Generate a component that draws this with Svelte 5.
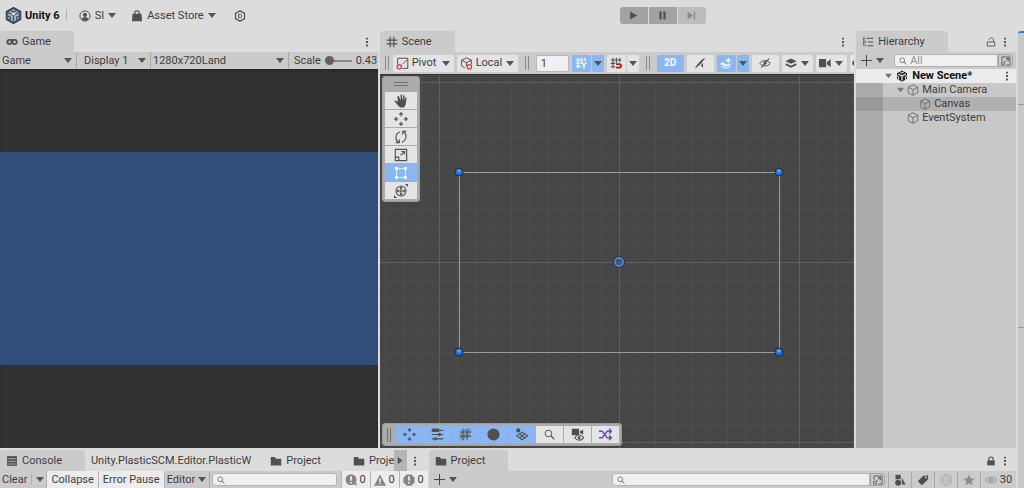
<script lang="ts">
	const tools = ['hand', 'move', 'rotate', 'scale', 'rect', 'transform'];
	const overlays = ['move', 'sliders', 'hatch', 'sphere', 'particles', 'find', 'camEye', 'shuffle'];
	const hierarchy = [
		{ name: 'Main Camera', depth: 1, open: true },
		{ name: 'Canvas', depth: 2, open: false },
		{ name: 'EventSystem', depth: 1, open: false }
	];
	const corners = [
		[-160, -90],
		[160, -90],
		[-160, 90],
		[160, 90]
	];
	const lines = Array.from({ length: 121 }, (_, i) => i - 60);
	const pan = { x: 2, y: 0 };
	const logs = [
		{ icon: 'info', label: 'Messages' },
		{ icon: 'warn', label: 'Warnings' },
		{ icon: 'error', label: 'Errors' }
	];
	const filters = ['shapes', 'tag', 'alert', 'star'];

	let tool = $state('rect');
	let selected = $state('Canvas');
	let enabled = $state(overlays.slice(0, 5));
	let scale = $state(0);

	function toggle(name: string) {
		enabled = enabled.includes(name) ? enabled.filter((n) => n !== name) : [...enabled, name];
	}
</script>

{#snippet icon(name: string)}
	<svg class="icon {name}" viewBox="0 0 16 16" aria-hidden="true">
		{#if name === 'unity'}
			<path d="M8 .4 14.8 4.2v7.6L8 15.6 1.2 11.8V4.2z" fill="#4c5763" stroke="#303a45" />
			<path d="m8 2.2 5 2.9v5.8l-5 2.9-5-2.9V5.100z" fill="#a9bccd" />
			<path d="M8 8v5.500M8 8 3.200 5.200M8 8l4.800-2.800M6 3.500l2 1.300 2-1.300M3 8.500l2 1v2.500M13 8.500l-2 1v2.500" fill="none" stroke="#3d4956" stroke-width="1.200" />
			<path d="m8 5.500 2 1.200-2 1.200-2-1.200z" fill="#e4eaf0" />
		{:else if name === 'user'}
			<circle cx="8" cy="8" r="6.800" fill="none" stroke="currentColor" stroke-width="1.300" />
			<circle cx="8" cy="6.500" r="2.700" fill="currentColor" />
			<path d="M3.500 12c1-3 8-3 9 0-2 3-7 3-9 0z" fill="currentColor" />
		{:else if name === 'bag'}
			<path d="M2 5h12l.7 10H1.300z" fill="currentColor" />
			<path d="M5 7V4a3 3 0 0 1 6 0v3" fill="none" stroke="currentColor" stroke-width="1.500" />
		{:else if name === 'hex'}
			<path d="m8 1 6 3.500v7L8 15l-6-3.500v-7z" fill="none" stroke="currentColor" stroke-width="1.600" />
			<path d="M6.300 5.500v5h1.500c3 0 3-5 0-5z" fill="none" stroke="currentColor" stroke-width="1.300" />
		{:else if name === 'game'}
			<path d="M4.500 4h7a4 4 0 0 1 0 8H10L8.500 10.500h-1L6 12H4.500a4 4 0 0 1 0-8z" fill="currentColor" />
			<path d="M2.800 8h4M4.800 6v4" stroke="#cbcbcb" stroke-width="1.200" />
			<circle cx="11.500" cy="8" r="1.700" fill="#cbcbcb" />
		{:else if name === 'grid'}
			<path d="M5.500 1v14M10.500 1v14M1 5.500h14M1 10.500h14" stroke="currentColor" stroke-width="1.500" />
		{:else if name === 'tree'}
			<path d="M1 3h3M6 3h9M4 8h2M8 8h7M4 13h2M8 13h7M2.500 3v10" stroke="currentColor" stroke-width="1.500" fill="none" />
		{:else if name === 'folder'}
			<path d="M1 2.500h5.500L8 5h7v9H1z" fill="currentColor" />
		{:else if name === 'console'}
			<path d="M1.500 1.500h13v13h-13z" fill="currentColor" />
			<path d="M3 5h10M3 8.500h10M3 12h10" stroke="#cbcbcb" />
		{:else if name === 'dots'}
			<path d="M6.500 1h3v3h-3zM6.500 6.500h3v3h-3zM6.500 12h3v3h-3z" fill="currentColor" />
		{:else if name === 'play'}
			<path d="M2 1v14L15 8z" fill="currentColor" />
		{:else if name === 'pause'}
			<path d="M2.500 1h4v14h-4zM9.500 1h4v14h-4z" fill="currentColor" />
		{:else if name === 'step'}
			<path d="M1 1v14l9.500-7zM12 1h2.500v14H12z" fill="currentColor" />
		{:else if name === 'pivot'}
			<path d="M2 9V1.500h12.500v12.500H8M8 9l6-6" fill="none" stroke="currentColor" stroke-width="1.200" />
			<circle cx="4" cy="12" r="2.700" fill="none" stroke="#d93b3b" stroke-width="1.500" />
		{:else if name === 'local'}
			<path d="m8 1 6 3v5M8 1 2 4v7l4 2.500M2 4l6 3 6-3M8 7v4" fill="none" stroke="currentColor" stroke-width="1.200" />
			<circle cx="11.500" cy="12" r="2.700" fill="none" stroke="#d93b3b" stroke-width="1.500" />
		{:else if name === 'gridY'}
			<path d="M4 1v14M8.500 1v8M13 1v4M1 4h14M1 8h8M1 12.500h7" stroke="currentColor" stroke-width="1.500" />
			<path d="m9 7 3 4 3-4M12 11v4.500" fill="none" stroke="currentColor" stroke-width="1.900" />
		{:else if name === 'snap'}
			<path d="M4 1v14M8.500 1v7M13 1v6M1 4h14M1 8.500h6M1 13h6" stroke="currentColor" stroke-width="1.400" />
			<path d="M8 9.500h4.500a2.300 2.300 0 0 1 0 4.600H8" fill="none" stroke="#c91313" stroke-width="2.400" />
		{:else if name === 'mute'}
			<path d="M3 11.500h3l5-5V3zM12 7.500V14l-3-2.500" fill="currentColor" />
			<path d="M2 14.500 14 2" stroke="currentColor" stroke-width="1.500" />
		{:else if name === 'effects'}
			<path d="m1 11.500 7 3 6-3V13l-6 3-7-3zM1 8l3-1.500 2 2 3 1.500 5-1.500v1.800L8 13 1 10z" fill="currentColor" />
			<path d="m11 0 1.200 3.200L15.500 4.500l-3.300 1.200L11 9 9.800 5.700 6.500 4.500l3.300-1.300z" fill="currentColor" />
		{:else if name === 'hidden'}
			<path d="M1 8.500c3.500-5 10.500-5 14 0-3.500 4.500-10.500 4.500-14 0z" fill="none" stroke="currentColor" stroke-width="1.300" />
			<circle cx="8" cy="8" r="2.200" fill="currentColor" />
			<path d="M3 14 13.500 2" stroke="currentColor" stroke-width="1.500" />
		{:else if name === 'layers'}
			<path d="m8 2 7.500 3.500L8 9 .5 5.500z" fill="currentColor" />
			<path d="m1 9.500 7 3.500 7-3.500" fill="none" stroke="currentColor" stroke-width="2.400" />
		{:else if name === 'camera'}
			<path d="M0 2.500h9.500v11H0zM10.500 7 15.500 2.500v11L10.500 9.500z" fill="currentColor" />
		{:else if name === 'hand'}
			<path d="M4.200 9 1.800 7.500C.7 7 0 8 1 8.800l3.800 4.700c1 1.500 2 2 3.700 2 3.200 0 4.500-1.700 4.900-4.500l1-6.400c.1-1-1.300-1.200-1.500-.2L12 8l.1-6c0-1.100-1.500-1.100-1.600 0L10 7.300 8.900 1c-.2-1-1.600-.8-1.500.2L7.700 7.500 5.500 2.600C5 1.600 3.800 2.200 4 3.100z" fill="currentColor" />
		{:else if name === 'move'}
			<path d="M8 1v4M8 11v4M1 8h4M11 8h4M6 3l2-2 2 2M6 13l2 2 2-2M3 6 1 8l2 2M13 6l2 2-2 2" fill="none" stroke="currentColor" stroke-width="1.300" />
		{:else if name === 'rotate'}
			<path d="M5.500 14.500C.5 11 1.500 4 7 2M10.500 1.500C15.500 5 14.500 12 9 14M2 14.500h4V10.500M14 1.500h-4V5.500" fill="none" stroke="currentColor" stroke-width="1.300" />
		{:else if name === 'scale'}
			<path d="M1.500 1.500h13v13h-13zM1.500 10.500h4v4M7.500 8.500 12 4M8.500 4H12v3.500" fill="none" stroke="currentColor" stroke-width="1.300" />
		{:else if name === 'rect'}
			<path d="M3 3h10v10H3z" fill="none" stroke="currentColor" />
			<path d="M1.200 1.200h3.400v3.400H1.200zM11.400 1.200h3.400v3.400h-3.400zM1.200 11.400h3.400v3.400H1.200zM11.400 11.400h3.400v3.400h-3.400z" fill="currentColor" />
		{:else if name === 'transform'}
			<circle cx="8" cy="8" r="5.800" fill="none" stroke="currentColor" stroke-width="1.200" />
			<path d="M8 3v10M3 8h10M6.500 5 8 3.500 9.500 5M6.500 11 8 12.500 9.500 11M5 6.500 3.500 8 5 9.500M11 6.500 12.500 8 11 9.500" fill="none" stroke="currentColor" stroke-width="1.200" />
			<path d="M12.500 0H16v3.500zM0 12.500V16h3.500z" fill="currentColor" />
		{:else if name === 'sliders'}
			<path d="M1 3h14M1 8h14M1 13.500h14" stroke="currentColor" stroke-width="1.500" />
			<path d="M1 .5h9v4.500H1zM9 6.300h3v3.500H9zM4 11.700h3v3.500H4z" fill="currentColor" />
		{:else if name === 'hatch'}
			<path d="M5 1v14M10 1v14M1 5h14M1 10h14" stroke="currentColor" stroke-width="1.300" />
			<path d="M1 14 14 1M4 15 15 4M1 9l8-8" stroke="currentColor" />
		{:else if name === 'sphere'}
			<circle cx="8" cy="8" r="7.500" fill="currentColor" />
		{:else if name === 'particles'}
			<circle cx="4" cy="3" r="2.600" fill="currentColor" />
			<path d="m9 5 6.500 4.500L9 14.500 2 9.500zM5.500 7l6.500 5M12.500 7l-7 5" fill="none" stroke="currentColor" stroke-width="1.300" />
		{:else if name === 'find'}
			<circle cx="6.500" cy="6.500" r="4.800" fill="none" stroke="currentColor" stroke-width="1.400" />
			<path d="m10 10 5 5" stroke="currentColor" stroke-width="1.800" />
		{:else if name === 'camEye'}
			<path d="M1 1h9v8H1zM11 4l4-2v6l-4-2z" fill="currentColor" />
			<path d="M4.500 12c3-4.500 8-4.500 11 0-3 4-8 4-11 0z" fill="#e4e4e4" stroke="currentColor" stroke-width="1.400" />
			<circle cx="10" cy="12" r="1.800" fill="currentColor" />
		{:else if name === 'shuffle'}
			<path d="M0 4h4l6 8h5M0 12h4l6-8h5M12.500 1 15.500 4l-3 3M12.500 9l3 3-3 3" fill="none" stroke="#7146b8" stroke-width="1.600" />
		{:else if name === 'cube'}
			<path d="m8 1 6.300 3.300v7.400L8 15l-6.300-3.300V4.300zM1.700 4.300 8 7.600l6.300-3.300M8 7.600V15" fill="none" stroke="#6a6a6a" stroke-width="1.200" />
		{:else if name === 'sceneAsset'}
			<path d="m8 .5 6.700 3.800v7.400L8 15.500l-6.700-3.800V4.300z" fill="#252525" />
			<path d="M8 8v6M8 8 3 5.200M8 8l5-2.800" stroke="#ececec" stroke-width="1.600" />
			<path d="m5 2.200 3 1.900 3-1.900M1.300 7.500l2 1.200v3.800M14.700 7.500l-2 1.200v3.800" stroke="#ececec" stroke-width="1.300" fill="none" />
		{:else if name === 'unlock'}
			<path d="M2 8h12v6.500H2zM5 4.500V4c0-3.500 7-3.500 7 0v4" fill="none" stroke="currentColor" stroke-width="1.400" />
		{:else if name === 'lock'}
			<path d="M2 7h12v8H2z" fill="currentColor" />
			<path d="M4.500 7V5c0-4.500 7-4.500 7 0v2" fill="none" stroke="currentColor" stroke-width="1.900" />
		{:else if name === 'popout'}
			<path d="M1.500 8V1.500h13v13H8M1 10h4.500v4.500H1zM7 9l5-5M8 4h4v4" fill="none" stroke="currentColor" stroke-width="1.300" />
		{:else if name === 'info'}
			<circle cx="8" cy="7.500" r="7.300" fill="#858585" />
			<path d="M9 12h6.500v3.500z" fill="#858585" />
			<path d="M8 3v6M8 10.500v2" stroke="#fff" stroke-width="2" />
		{:else if name === 'warn'}
			<path d="m8 .5 8 15H0z" fill="#858585" />
			<path d="M8 5.500v5M8 11.500v2" stroke="#fff" stroke-width="1.800" />
		{:else if name === 'error'}
			<path d="M5 .5h6L15.500 5v6L11 15.500H5L.5 11V5z" fill="#858585" />
			<path d="M8 3v6M8 10.500v2" stroke="#fff" stroke-width="2" />
		{:else if name === 'shapes'}
			<path d="M2 1h7v6H2zM10.500 5l5 9h-5z" fill="currentColor" />
			<circle cx="5.500" cy="11.500" r="4" fill="currentColor" />
		{:else if name === 'tag'}
			<path d="m8 2.500 6.500-1L15 7l-8.500 8L1 9.500z" fill="currentColor" />
			<circle cx="11.800" cy="4.500" r="1.300" fill="#cbcbcb" />
		{:else if name === 'alert'}
			<path d="M5 .7h6L15.300 5v6L11 15.300H5L.7 11V5z" fill="#bebebe" stroke="#b2b2b2" />
			<path d="M8 3v6M8 10.500v2" stroke="#cbcbcb" stroke-width="2" />
		{:else if name === 'star'}
			<path d="m8 .8 2.200 4.900 5.300.5-4 3.500 1.200 5.300L8 12.300 3.300 15l1.200-5.300-4-3.500 5.300-.5z" fill="#8c8c8c" />
		{:else if name === 'eye'}
			<path d="M.5 8c3.500-5.500 11.500-5.500 15 0-3.500 5.500-11.500 5.500-15 0z" fill="none" stroke="#a4a4a4" stroke-width="1.400" />
			<circle cx="8" cy="8" r="3.300" fill="#a4a4a4" />
		{/if}
	</svg>
{/snippet}

{#snippet arrow()}
	<svg class="arrow" viewBox="0 0 8 5" aria-hidden="true"><path d="M0 0h8L4 5z" fill="currentColor" /></svg>
{/snippet}

{#snippet dropdown(label: string, kind: string)}
	<label class="dropdown {kind}-menu">
		{#if kind === 'pivot' || kind === 'local'}{@render icon(kind)}{/if}
		<select aria-label={kind}><option>{label}</option></select>
		{@render arrow()}
	</label>
{/snippet}

{#snippet more()}
	<button class="plain" aria-label="More">{@render icon('dots')}</button>
{/snippet}

<div class="editor">
	<header class="topbar">
		<div class="account">
			<strong class="brand">{@render icon('unity')}Unity 6</strong>
			<span class="rule"></span>
			<button class="plain">{@render icon('user')}SI{@render arrow()}</button>
			<button class="plain store">{@render icon('bag')}Asset Store{@render arrow()}</button>
			<button class="plain" aria-label="Services">{@render icon('hex')}</button>
		</div>
		<div class="playback">
			<button aria-label="Play">{@render icon('play')}</button>
			<button aria-label="Pause">{@render icon('pause')}</button>
			<button aria-label="Step" disabled>{@render icon('step')}</button>
		</div>
	</header>

	<div class="body">
		<div class="docks">
			<div class="upper">
				<section class="panel game-panel">
					<div class="tabs">
						<button class="tab active">{@render icon('game')}Game</button>
						<div class="tab-end">{@render more()}</div>
					</div>
					<div class="toolbar">
						{@render dropdown('Game', 'view')}
						{@render dropdown('Display 1', 'display')}
						{@render dropdown('1280x720Land', 'resolution')}
						<label class="zoom">Scale <input type="range" min="0" max="5" step="0.01" bind:value={scale} /> 0.43</label>
					</div>
					<div class="game-view"><div class="frame"></div></div>
				</section>

				<section class="panel scene-panel">
					<div class="tabs">
						<button class="tab active">{@render icon('grid')}Scene</button>
						<div class="tab-end">{@render more()}</div>
					</div>
					<div class="scene-bar">
						<span class="handle"></span>
						{@render dropdown('Pivot', 'pivot')}
						{@render dropdown('Local', 'local')}
						<span class="handle"></span>
						<input class="step-size" aria-label="Grid size" value="1" />
						<div class="split on">
							<button aria-label="Grid axis">{@render icon('gridY')}</button>
							<button aria-label="Grid options">{@render arrow()}</button>
						</div>
						<div class="split">
							<button aria-label="Snapping">{@render icon('snap')}</button>
							<button aria-label="Snap options">{@render arrow()}</button>
						</div>
						<span class="handle"></span>
						<button class="chip on">2D</button>
						<button class="chip" aria-label="Audio">{@render icon('mute')}</button>
						<div class="split on">
							<button aria-label="Effects">{@render icon('effects')}</button>
							<button aria-label="Effect options">{@render arrow()}</button>
						</div>
						<button class="chip" aria-label="Visibility">{@render icon('hidden')}</button>
						<button class="chip wide" aria-label="Layers">{@render icon('layers')}{@render arrow()}</button>
						<button class="chip wide" aria-label="Camera">{@render icon('camera')}{@render arrow()}</button>
						<button class="chip gizmos" aria-label="Gizmos">{@render icon('sphere')}</button>
					</div>
					<div class="scene-view">
						<svg class="world" width="2" height="2" aria-label="Scene">
							<g transform="translate({pan.x} {pan.y})">
								{#each lines as i}
									<path d="M{i * 18} -1200V1200M-1200 {i * 18}H1200" class:major={i % 10 === 0} />
								{/each}
								<rect x="-160" y="-90" width="320" height="180" />
								{#each corners as [x, y]}
									<circle class="corner" cx={x} cy={y} r="4" />
									<circle class="shine" cx={x} cy={y - 1} r="1.500" />
								{/each}
								<circle class="pivot-halo" r="5.500" />
								<circle class="pivot-ring" r="4" />
							</g>
						</svg>
						<div class="tool-palette">
							<span class="grip"></span>
							{#each tools as name}
								<button class:on={tool === name} aria-label={name} onclick={() => (tool = name)}>
									{@render icon(name)}
								</button>
							{/each}
						</div>
						<div class="overlay-bar">
							<span class="handle"></span>
							{#each overlays as name}
								<button class:on={enabled.includes(name)} aria-label={name} onclick={() => toggle(name)}>
									{@render icon(name)}
								</button>
							{/each}
						</div>
					</div>
				</section>

				<section class="panel hierarchy-panel">
					<div class="tabs">
						<button class="tab active">{@render icon('tree')}Hierarchy</button>
						<div class="tab-end">
							<button class="plain" aria-label="Lock">{@render icon('unlock')}</button>
							{@render more()}
						</div>
					</div>
					<div class="toolbar">
						<button class="plain add" aria-label="Create"><span class="plus"></span>{@render arrow()}</button>
						<label class="search">{@render icon('find')}<input placeholder="All" aria-label="Search hierarchy" /></label>
						<button class="popout-button" aria-label="Open search">{@render icon('popout')}</button>
					</div>
					<div class="tree-view">
						<div class="row scene-row">
							{@render arrow()}{@render icon('sceneAsset')}<strong>New Scene*</strong>
							{@render more()}
						</div>
						{#each hierarchy as item}
							<button
								class="row depth-{item.depth}"
								class:selected={selected === item.name}
								onclick={() => (selected = item.name)}
							>
								<span class="fold">{#if item.open}{@render arrow()}{/if}</span>
								{@render icon('cube')}{item.name}
							</button>
						{/each}
					</div>
				</section>
			</div>

			<div class="lower">
				<section class="panel console-panel">
					<div class="tabs">
						<button class="tab active">{@render icon('console')}Console</button>
						<button class="tab">Unity.PlasticSCM.Editor.PlasticW</button>
						<button class="tab second">{@render icon('folder')}Project</button>
						<button class="tab cut">{@render icon('folder')}Project</button>
						<button class="scroll" aria-label="Next tabs">{@render arrow()}</button>
						<div class="tab-end">{@render more()}</div>
					</div>
					<div class="toolbar">
						<button class="plain clear">Clear<span class="rule"></span>{@render arrow()}</button>
						<button class="lit">Collapse</button>
						<button class="lit">Error Pause</button>
						{@render dropdown('Editor', 'target')}
						<label class="search">{@render icon('find')}<input aria-label="Search console" /></label>
						{#each logs as log}
							<button class="lit count" aria-label={log.label}>{@render icon(log.icon)}0</button>
						{/each}
					</div>
				</section>

				<section class="panel project-panel">
					<div class="tabs">
						<button class="tab active">{@render icon('folder')}Project</button>
						<div class="tab-end">
							<button class="plain" aria-label="Lock">{@render icon('lock')}</button>
							{@render more()}
						</div>
					</div>
					<div class="toolbar">
						<button class="plain add" aria-label="Create"><span class="plus"></span>{@render arrow()}</button>
						<label class="search">{@render icon('find')}<input aria-label="Search project" /></label>
						<button class="popout-button" aria-label="Open search">{@render icon('popout')}</button>
						<div class="filters">
							{#each filters as name}
								<button aria-label={name}>{@render icon(name)}</button>
							{/each}
							<button class="visible">{@render icon('eye')}30</button>
						</div>
					</div>
				</section>
			</div>
		</div>
		<aside class="inspector"><div></div><div></div></aside>
	</div>
</div>

<style>
	:global(body) {
		background: #dcdcdc;
	}

	.editor {
		height: 100vh;
		display: flex;
		flex-direction: column;
		overflow: hidden;
		background: #dcdcdc;
		color: #3c3c3c;
		font: 11px/16px Roboto, Inter, sans-serif;
	}

	.editor * {
		box-sizing: border-box;
	}

	button,
	input,
	select {
		margin: 0;
		padding: 0;
		border: 0;
		background: none;
		color: inherit;
		font: inherit;
		min-width: 0;
	}

	button {
		display: flex;
		align-items: center;
		justify-content: center;
		white-space: nowrap;
	}

	.icon {
		width: 12px;
		height: 12px;
		flex: none;
		color: #505050;
	}

	.arrow {
		width: 8px;
		height: 5px;
		flex: none;
		color: #555;
	}

	.rule {
		width: 1px;
		height: 11px;
		background: #b0b0b0;
	}

	.topbar {
		flex: none;
		height: 31px;
		display: grid;
		grid-template-columns: 1fr auto 1fr;
		padding-left: 5px;
	}

	.account {
		display: flex;
		align-items: center;
		gap: 12px;
	}

	.brand {
		display: flex;
		align-items: center;
		gap: 3px;
		margin-right: -6px;
		color: #111;
		font-weight: 700;
	}

	.brand .icon {
		width: 17px;
		height: 17px;
	}

	.account .plain {
		gap: 4px;
	}

	.account .store {
		margin-left: 3px;
		margin-right: 6px;
	}

	.playback {
		display: flex;
		align-items: center;
		gap: 1px;
		margin-left: 296px;
	}

	.playback button {
		width: 28px;
		height: 17px;
		background: #a2a2a2;
	}

	.playback button:first-child {
		border-radius: 3px 0 0 3px;
	}

	.playback button:last-child {
		border-radius: 0 3px 3px 0;
		background: #bcbcbc;
	}

	.playback .icon {
		width: 9px;
		height: 9px;
	}

	.playback button:disabled .icon {
		color: #888;
	}

	.body {
		flex: 1;
		min-height: 0;
		display: flex;
		gap: 2px;
	}

	.docks {
		flex: 1;
		min-width: 0;
		display: flex;
		flex-direction: column;
		gap: 2px;
	}

	.upper {
		flex: 1;
		min-height: 0;
		display: grid;
		grid-template-columns: 378fr 475fr 160fr;
		gap: 2px;
	}

	.lower {
		display: grid;
		grid-template-columns: 428fr 588fr;
		gap: 1px;
	}

	.panel {
		min-width: 0;
		min-height: 0;
		display: flex;
		flex-direction: column;
		overflow: hidden;
	}

	.tabs {
		flex: none;
		display: flex;
		height: 21px;
	}

	.tab {
		gap: 4px;
		padding: 0 8px 0 6px;
	}

	.tab.active {
		padding-right: 23px;
		border-radius: 3px 3px 0 0;
		background: #cbcbcb;
	}

	.tab-end {
		display: flex;
		align-items: center;
		margin-left: auto;
		padding-right: 6px;
		gap: 4px;
	}

	.tab-end .icon {
		width: 10px;
		height: 10px;
	}

	.toolbar {
		flex: none;
		height: 17px;
		display: flex;
		align-items: stretch;
		background: #cbcbcb;
	}

	.dropdown {
		display: flex;
		align-items: center;
		flex: none;
	}

	.dropdown select {
		flex: 1;
		appearance: none;
	}

	.toolbar .dropdown {
		padding: 0 4px 0 2px;
		border-right: 1px solid #a8a8a8;
	}

	.view-menu {
		width: 77px;
	}

	.toolbar .display-menu {
		width: 74px;
		padding-left: 7px;
	}

	.resolution-menu {
		width: 138px;
	}

	.zoom {
		display: flex;
		align-items: center;
		gap: 4px;
		padding-left: 5px;
		white-space: nowrap;
	}

	.zoom input {
		width: 27px;
		height: 9px;
		appearance: none;
		background: linear-gradient(#858585, #858585) center / 100% 2px no-repeat;
	}

	.zoom input::-webkit-slider-thumb {
		width: 9px;
		height: 9px;
		appearance: none;
		border-radius: 50%;
		background: #606060;
	}

	.game-view {
		flex: 1;
		display: flex;
		align-items: center;
		background: #323232;
		box-shadow: inset 0 2px 3px #262626;
	}

	.frame {
		width: 100%;
		aspect-ratio: 16 / 9;
		background: #314d79;
	}

	.scene-bar {
		flex: none;
		height: 22px;
		display: flex;
		align-items: center;
		gap: 3px;
		padding-left: 5px;
		overflow: hidden;
		background: #cbcbcb;
	}

	.handle {
		width: 4px;
		height: 14px;
		flex: none;
		margin: 0 4px;
		border: solid #8a8a8a;
		border-width: 0 1px;
	}

	.handle:first-child {
		margin-left: 0;
		margin-right: 1px;
	}

	.scene-bar .dropdown {
		width: 61px;
		height: 17px;
		gap: 3px;
		padding: 0 4px 0 3px;
		border-radius: 2px;
		background: #e4e4e4;
	}

	.scene-bar .dropdown .icon {
		width: 13px;
		height: 13px;
	}

	.step-size {
		width: 33px;
		height: 17px;
		flex: none;
		padding-left: 4px;
		border: 1px solid #b8b8b8;
		border-radius: 2px;
		background: #f0f0f0;
	}

	.split {
		display: flex;
		flex: none;
		gap: 1px;
	}

	.split button,
	.chip {
		height: 17px;
		flex: none;
		border-radius: 2px;
		background: #e4e4e4;
	}

	.split button:first-child {
		width: 19px;
	}

	.split button:last-child {
		width: 12px;
	}

	.chip {
		width: 27px;
	}

	.chip.wide {
		width: 31px;
		gap: 4px;
	}

	.chip.gizmos {
		justify-content: flex-start;
		padding-left: 2px;
	}

	.gizmos .icon {
		width: 6px;
		height: 6px;
	}

	.chip.on,
	.split.on button,
	.scene-view button.on {
		background: #8ab6f2;
	}

	.chip.on {
		color: #f4f8ff;
		font-size: 10px;
		font-weight: 700;
	}

	.on .gridY,
	.on .effects,
	.on .rect {
		color: #f4f8ff;
	}

	.scene-view {
		flex: 1;
		position: relative;
		overflow: hidden;
		border-top: 1px solid #333;
		background: #464646;
	}

	.world {
		position: absolute;
		left: 50%;
		top: 50%;
		overflow: visible;
		fill: none;
	}

	.world path {
		stroke: #4d4d4d;
		shape-rendering: crispEdges;
	}

	.world .major {
		stroke: #606060;
	}

	.world rect {
		stroke: #9c9c9c;
		shape-rendering: crispEdges;
	}

	.world .corner {
		fill: #1c6fe0;
		stroke: #202a38;
	}

	.world .shine {
		fill: #6aa6f2;
	}

	.pivot-halo {
		stroke: #303030;
	}

	.pivot-ring {
		stroke: #3f86e0;
		stroke-width: 2px;
	}

	.tool-palette,
	.overlay-bar {
		position: absolute;
		left: 2px;
		display: flex;
		border-radius: 3px;
		border: 1px solid #9c9c9c;
		background: #ababab;
		gap: 1px;
	}

	.tool-palette {
		top: 1px;
		flex-direction: column;
		padding: 0 2px 2px;
	}

	.grip {
		width: 14px;
		height: 4px;
		margin: 5px auto;
		border: solid #707070;
		border-width: 1px 0;
	}

	.tool-palette button {
		width: 32px;
		height: 17px;
		background: #e4e4e4;
	}

	.tool-palette .icon {
		width: 14px;
		height: 14px;
	}

	.overlay-bar {
		bottom: 2px;
		align-items: center;
		padding: 2px 2px 2px 4px;
	}

	.overlay-bar .handle {
		margin-right: 4px;
		border-color: #707070;
	}

	.overlay-bar button {
		width: 27px;
		height: 17px;
		background: #e4e4e4;
	}

	.overlay-bar .icon {
		width: 13px;
		height: 13px;
	}

	.overlay-bar .find {
		width: 11px;
		height: 11px;
	}

	.search {
		flex: 1;
		min-width: 0;
		display: flex;
		align-items: center;
		gap: 3px;
		margin: 2px 0;
		padding-left: 4px;
		border: 1px solid #b4b4b4;
		border-radius: 3px 0 0 3px;
		background: #f0f0f0;
	}

	.search .icon {
		width: 8px;
		height: 8px;
	}

	.search input {
		flex: 1;
		height: 11px;
		outline: 0;
	}

	.search input::placeholder {
		color: #909090;
	}

	.add {
		gap: 4px;
		padding: 0 10px 0 5px;
	}

	.plus {
		width: 11px;
		height: 11px;
		background:
			linear-gradient(#484848, #484848) center / 100% 1px no-repeat,
			linear-gradient(#484848, #484848) center / 1px 100% no-repeat;
	}

	.popout-button {
		width: 15px;
		margin: 2px 3px 2px 0;
		border: 1px solid #a4a4a4;
		border-radius: 0 3px 3px 0;
	}

	.popout-button .icon {
		width: 10px;
		height: 10px;
	}

	.tree-view {
		flex: 1;
		background: linear-gradient(90deg, #ababab 27px, #c8c8c8 27px);
	}

	.row {
		width: 100%;
		height: 14px;
		display: flex;
		align-items: center;
		justify-content: flex-start;
		gap: 3px;
		line-height: 14px;
	}

	.row .arrow {
		width: 7px;
		height: 6px;
		color: #777;
	}

	.scene-row {
		padding: 0 4px 0 29px;
		background: #ececec;
		color: #111;
		gap: 4px;
	}

	.scene-row strong {
		font-weight: 700;
	}

	.scene-row .plain {
		margin-left: auto;
	}

	.scene-row .dots {
		width: 10px;
		height: 10px;
	}

	.depth-1 {
		padding-left: 41px;
	}

	.depth-2 {
		padding-left: 53px;
	}

	.row.selected {
		background: linear-gradient(90deg, #999 27px, #b0b0b0 27px);
	}

	.fold {
		width: 7px;
		display: flex;
	}

	.console-panel .tab {
		flex-shrink: 0;
	}

	.console-panel .second {
		padding-left: 11px;
		padding-right: 26px;
	}

	.console-panel .tab.cut {
		flex: 1;
		padding-right: 0;
		justify-content: flex-start;
		overflow: hidden;
	}

	.scroll {
		width: 13px;
		flex: none;
		background: #b4b4b4;
	}

	.scroll .arrow {
		transform: rotate(-90deg);
	}

	.console-panel .tab-end {
		padding: 0 8px 0 3px;
	}

	.clear {
		gap: 4px;
		padding: 0 2px;
	}

	.lit {
		padding: 0 4px;
		border-left: 1px solid #b4b4b4;
		background: #ececec;
	}

	.console-panel .target-menu {
		gap: 2px;
		padding: 0 3px 0 2px;
		border-left: 1px solid #b4b4b4;
	}

	.console-panel .search,
	.project-panel .search {
		margin-left: 2px;
		border-radius: 3px;
	}

	.console-panel .search {
		margin-right: 4px;
	}

	.console-panel .count {
		width: 29px;
		gap: 2px;
		padding: 0;
	}

	.project-panel .add {
		margin-right: auto;
	}

	.project-panel .search {
		flex: none;
		width: 44%;
		border-radius: 3px 0 0 3px;
	}

	.filters {
		display: flex;
	}

	.filters button {
		width: 23px;
		border-left: 1px solid #a8a8a8;
	}

	.filters .visible {
		width: 36px;
		gap: 3px;
	}

	.inspector {
		width: 6px;
		border-top: 2px solid #3a79c8;
		border-radius: 3px 0 0;
		background: #c8c8c8;
	}

	.inspector div {
		height: 72px;
		border-bottom: 1px solid #999;
	}

	.inspector div + div {
		height: 223px;
	}
</style>
